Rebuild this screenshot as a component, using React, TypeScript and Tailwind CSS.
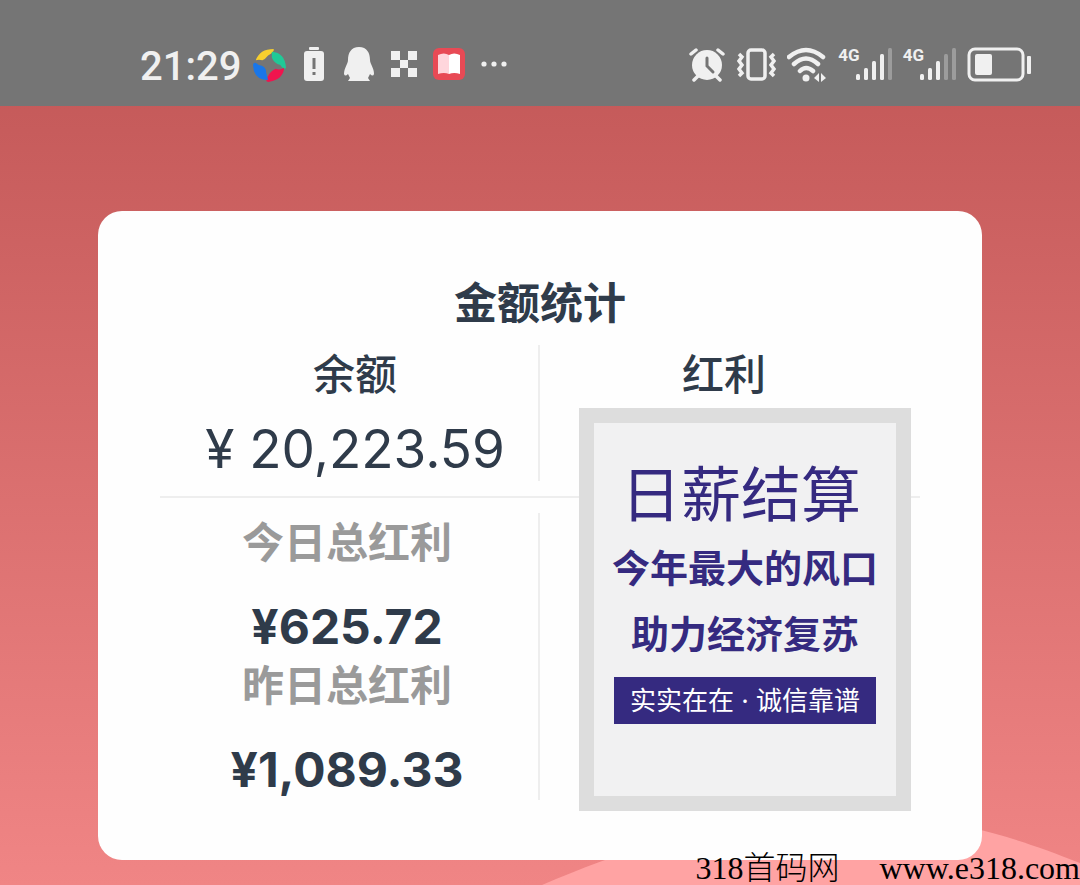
import type { ReactNode } from "react";

const STATUS_ICON = "h-[38px] shrink-0 text-[#f0f0f0]";

export default function App() {
  return (
    <div className="relative flex min-h-screen flex-col overflow-hidden bg-linear-to-b from-[#c05555] to-[#f08585] font-['Inter','Noto_Sans_CJK_SC',sans-serif] text-[#2f3b4a]">
      <StatusBar />

      {/* Light hill at the bottom of the page */}
      <svg
        className="absolute bottom-0 left-0 h-[70px] w-full"
        viewBox="0 0 1080 70"
        preserveAspectRatio="none"
        aria-hidden="true"
      >
        <path d="M542 70 C650 24 740 0 850 0 C920 0 980 8 1080 48 V70 Z" fill="#ffa3a3" />
      </svg>

      <main className="px-[98px] pt-[105px] pb-[25px]">
        <section className="relative rounded-3xl bg-[#fefefe] px-[62px] pt-16 pb-[60px]">
          <h1 className="text-center text-[43px] leading-[56px] font-bold">金额统计</h1>

          <div className="mt-[14px] grid h-[135px] grid-cols-2 text-center">
            <div className="border-r-2 border-[#eeeeee] pl-3">
              <h2 className="text-[42px] leading-[60px] font-medium">余额</h2>
              <p className="mt-3 text-[53px] leading-[64px] whitespace-nowrap">¥ 20,223.59</p>
            </div>
            <div className="pr-3">
              <h2 className="text-[42px] leading-[60px] font-medium">红利</h2>
            </div>
          </div>

          <hr className="mt-4 mb-[15px] border-t-2 border-[#eeeeee]" />

          <div className="grid h-[287px] grid-cols-2 text-center">
            <div className="border-r-2 border-[#eeeeee]">
              <Stat label="今日总红利" value="¥625.72" />
              <Stat label="昨日总红利" value="¥1,089.33" />
            </div>
          </div>

          <Notice />
        </section>
      </main>

      <p className="absolute right-0 bottom-0 flex gap-10 font-['Liberation_Serif','Noto_Sans_CJK_SC',serif] text-[32px] leading-[34px] font-light whitespace-nowrap text-black">
        <span>318首码网</span>
        <span>www.e318.com</span>
      </p>
    </div>
  );
}

function Stat({ label, value }: { label: string; value: string }) {
  return (
    <div className="flex h-[143px] flex-col pr-1">
      <span className="text-[42px] leading-[60px] font-bold text-[#9a9a9a]">{label}</span>
      <span className="mt-6 text-[48px] leading-[60px] font-bold">{value}</span>
    </div>
  );
}

function Notice() {
  return (
    <aside className="absolute top-[197px] right-[71px] flex h-[403px] w-[332px] flex-col items-center border-[15px] border-[#dddddd] bg-[#f1f1f2] pt-9 whitespace-nowrap text-[#352a80]">
      <p className="pr-2 text-[60px] leading-[72px]">日薪结算</p>
      <p className="mt-1 text-[38px] leading-[66px] font-bold">今年最大的风口</p>
      <p className="text-[38px] leading-[66px] font-bold">助力经济复苏</p>
      <p className="mt-[10px] w-[262px] bg-[#352a80] text-center text-[26px] leading-[47px] text-white">
        实实在在 · 诚信靠谱
      </p>
    </aside>
  );
}

function StatusBar() {
  return (
    <header className="flex h-[106px] items-center justify-between bg-[#757575] pt-6 pr-[49px] pl-[140px]">
      <div className="flex items-center gap-[11px]">
        <time className="pt-1 font-['Roboto',sans-serif] text-[40px] leading-[40px] font-medium text-[#f0f0f0]">
          21:29
        </time>
        <Icon width={36} className="w-[34px]">
          <path d="M4 14 Q8 2 23 2 Q24 5 17 9 Q14 13 11 14 Q7 13 4 14 Z" fill="#f7cf2e" />
          <path d="M21 5 Q35 6 36 22 Q34 25 30 19 Q23 17 21 11 Z" fill="#20c997" />
          <path d="M34 22 Q33 35 17 37 Q13 36 17 31 Q19 26 25 23 Q30 25 34 22 Z" fill="#f0144e" />
          <path d="M17 35 Q2 35 1 19 Q2 14 7 19 Q15 20 15 27 Z" fill="#1976e8" />
        </Icon>
        <Icon width={34} className="w-[34px]">
          <rect x="12" y="1" width="10" height="3" rx="1" fill="currentColor" />
          <rect x="7" y="5" width="20" height="30" rx="3" fill="currentColor" />
          <path d="M17 12 V23 M17 26 V29" stroke="#757575" strokeWidth="3" />
        </Icon>
        <Icon width={32} className="w-[34px]">
          <path
            d="M16 1 C8 1 5 7 5 14 C5 18 1 22 1 28 Q2 31 5 28 L7 32 L5 35 H27 L25 32 L27 28 Q30 31 31 28 C31 22 27 18 27 14 C27 7 24 1 16 1 Z"
            fill="currentColor"
          />
        </Icon>
        <Icon width={32} className="w-[34px]">
          <path
            d="M3 5 h9 v9 h-9 Z M20 5 h9 v9 h-9 Z M12 14 h8 v8 h-8 Z M3 22 h9 v9 h-9 Z M20 22 h9 v9 h-9 Z"
            fill="currentColor"
          />
        </Icon>
        <Icon width={34} className="w-[34px]">
          <rect x="1" y="2" width="32" height="32" rx="6" fill="#e84a55" />
          <path d="M6 9 Q12 6 17 9 V28 Q12 26 6 28 Z" fill="#ffd6dc" />
          <path d="M17 9 Q22 6 28 9 V28 Q22 26 17 28 Z" fill="#ffffff" />
        </Icon>
        <Icon width={32} className="w-[34px]">
          <circle cx="6" cy="18" r="2.6" fill="currentColor" />
          <circle cx="16" cy="18" r="2.6" fill="currentColor" />
          <circle cx="26" cy="18" r="2.6" fill="currentColor" />
        </Icon>
      </div>

      <div className="flex items-center gap-[11px]">
        <Icon width={38} className="w-[38px]">
          <circle cx="20" cy="19" r="15" fill="currentColor" />
          <path
            d="M4 8 L9 4 M36 8 L31 4 M7 34 L11 30 M33 34 L29 30"
            stroke="currentColor"
            strokeWidth="3.5"
            strokeLinecap="round"
          />
          <path d="M20 12 V20 L26 26" fill="none" stroke="#757575" strokeWidth="3" strokeLinecap="round" />
        </Icon>
        <Icon width={40} className="w-10">
          <rect x="12" y="4" width="17" height="29" rx="3" fill="none" stroke="currentColor" strokeWidth="3.5" />
          <path
            d="M3 8 L6 11 L3 15 L6 19 L3 23 L6 27 L3 30 M38 8 L35 11 L38 15 L35 19 L38 23 L35 27 L38 30"
            fill="none"
            stroke="currentColor"
            strokeWidth="3.5"
          />
        </Icon>
        <Icon width={40} className="w-10">
          <path
            d="M2 11 Q19 -3 36 11 M7 18 Q19 7 31 18 M13 25 Q19 19 26 25"
            fill="none"
            stroke="currentColor"
            strokeWidth="4.5"
            strokeLinecap="round"
          />
          <circle cx="19" cy="32" r="3.5" fill="currentColor" />
          <path d="M32 27 V36 L27 32 Z M34 27 V36 L39 32 Z" fill="currentColor" />
        </Icon>
        <Signal level={4} />
        <Signal level={3} />
        <Icon width={64} className="w-16">
          <rect x="2" y="3" width="54" height="31" rx="6" fill="none" stroke="currentColor" strokeWidth="3" />
          <rect x="8" y="8" width="17" height="21" rx="2" fill="currentColor" />
          <rect x="60" y="10" width="4" height="18" rx="1" fill="currentColor" />
        </Icon>
      </div>
    </header>
  );
}

function Signal({ level }: { level: number }) {
  return (
    <div className="flex items-start text-[#f0f0f0]">
      <span className="font-['Roboto',sans-serif] text-[17px] leading-[18px] font-bold">4G</span>
      <Icon width={36} className="-ml-1 w-9">
        {[28, 22, 15, 8, 2].map((y, i) => (
          <rect
            key={y}
            x={i * 8}
            y={y}
            width="4"
            height={34 - y}
            rx="1.5"
            fill={i < level ? "currentColor" : "#9c9c9c"}
          />
        ))}
      </Icon>
    </div>
  );
}

function Icon({ width, className, children }: { width: number; className: string; children: ReactNode }) {
  return (
    <svg className={`${STATUS_ICON} ${className}`} viewBox={`0 0 ${width} 38`} aria-hidden="true">
      {children}
    </svg>
  );
}
